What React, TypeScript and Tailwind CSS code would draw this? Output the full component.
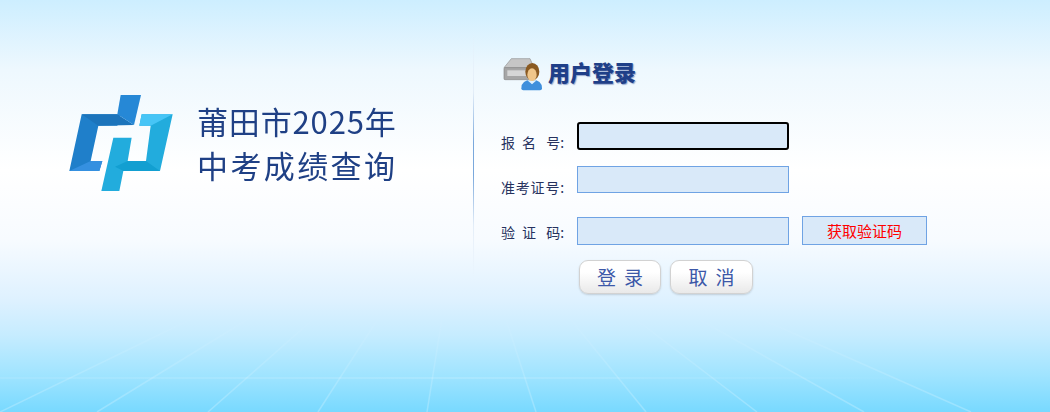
const cjk = "font-['Noto_Sans_CJK_SC','Liberation_Sans',sans-serif]"

const fieldBase = "block w-[212px] bg-[#d9e9f9] outline-none"
const labelBase = "w-[76px] shrink-0 text-[14px] leading-[18px] text-[#26325e]"
const actionBtn =
  "h-[34px] rounded-[9px] border border-[#d2d2d2] bg-[linear-gradient(to_bottom,#ffffff,#ffffff_35%,#e9e9e9)] pl-[8px] text-[19px] tracking-[8px] text-[#3c58a8] shadow-[0_1px_2px_rgba(0,0,0,0.15)]"

function Logo() {
  return (
    <svg width="125" height="115" viewBox="0 0 375 345" className="shrink-0 blur-[0.4px]">
      {/* left half */}
      <polygon points="65,88 182,88 172,122 115,122 92,228 127,228 118,258 28,258" fill="#1f7fca" />
      <polygon points="65,88 172,88 222,120 115,122" fill="#1c74bb" />
      <polygon points="182,30 243,30 222,120 172,88" fill="#2688d6" />
      <polygon points="28,258 92,228 127,228 118,258" fill="#3590e0" />
      {/* right half */}
      <polygon points="245,88 338,88 300,258 190,258 178,318 124,318 160,158 215,158 203,228 258,228 272,122 238,122" fill="#22acdd" />
      <polygon points="245,88 338,88 272,122 238,122" fill="#47c5f6" />
      <polygon points="203,228 258,228 300,258 190,258 165,245" fill="#129fd1" />
    </svg>
  )
}

function LoginIcon() {
  return (
    <svg width="50" height="40" viewBox="30 30 150 120" className="shrink-0 blur-[0.4px]">
      <polygon points="42,68 64,41 120,41 132,68" fill="#c6c6c6" stroke="#8f8f8f" strokeWidth="2" />
      <rect x="42" y="68" width="92" height="36" rx="3" fill="#a6a6a6" stroke="#868686" strokeWidth="2" />
      <rect x="52" y="76" width="64" height="17" fill="#d6d6d6" />
      <path d="M94 130 q0 -26 32 -26 q30 0 30 26 q0 6 -6 6 h-50 q-6 0 -6 -6z" fill="#3f8fdc" />
      <path d="M112 106 l14 12 l14 -12z" fill="#e2f2ff" />
      <ellipse cx="127" cy="80" rx="21" ry="26" fill="#8a5a22" />
      <ellipse cx="126" cy="89" rx="14" ry="19" fill="#f0c68a" />
    </svg>
  )
}

function FloorLines() {
  const bottoms = [0, 97, 208, 318, 427, 536, 646, 757, 864, 971]
  return (
    <svg width="1050" height="412" viewBox="0 0 1050 412" className="absolute inset-0 pointer-events-none">
      <defs>
        <linearGradient id="ray" gradientUnits="userSpaceOnUse" x1="0" y1="315" x2="0" y2="412">
          <stop offset="0" stopColor="#fff" stopOpacity="0" />
          <stop offset="1" stopColor="#fff" stopOpacity="0.24" />
        </linearGradient>
        <linearGradient id="horizon" gradientUnits="userSpaceOnUse" x1="0" y1="0" x2="945" y2="0">
          <stop offset="0" stopColor="#fff" stopOpacity="0.08" />
          <stop offset="0.5" stopColor="#fff" stopOpacity="0.14" />
          <stop offset="1" stopColor="#fff" stopOpacity="0" />
        </linearGradient>
      </defs>
      {bottoms.map((x) => (
        <line key={x} x1={x} y1="412" x2={x + (463 - x) * (97 / 225)} y2="315" stroke="url(#ray)" strokeWidth="1.5" />
      ))}
      <rect x="0" y="377" width="945" height="2" fill="url(#horizon)" />
    </svg>
  )
}

export default function App() {
  return (
    <div className={`${cjk} relative flex h-[412px] w-[1050px] overflow-hidden bg-[linear-gradient(to_bottom,#cdeeff_0px,#eef8fe_70px,#ffffff_170px,#f7fbff_240px,#def1ff_300px,#c6ecff_335px,#a0e4ff_375px,#78d9ff_412px)]`}>
      <FloorLines />

      {/* logo side */}
      <div className="flex h-[285px] w-[473px] shrink-0 items-start pl-[60px] pt-[85px]">
        <Logo />
        <div className="ml-[12px] mt-[14px] text-[#1f4085] blur-[0.3px]">
          <div className="text-[31px] leading-[44px] tracking-[0.85px] whitespace-nowrap">莆田市2025年</div>
          <div className="text-[31px] leading-[44px] tracking-[2.4px] whitespace-nowrap">中考成绩查询</div>
        </div>
      </div>

      <div className="mt-[30px] h-[250px] w-px shrink-0 bg-[linear-gradient(to_bottom,rgba(122,168,220,0),#e3edf8_25%,#7aa8dc_45%,#7aa8dc_58%,#e3edf8_78%,rgba(122,168,220,0))]" />

      {/* login form */}
      <div className="relative pl-[27px] pt-[55px]">
        <div className="-ml-px flex h-[40px] items-center">
          <LoginIcon />
          <span className="-ml-[2px] -mt-[8px] text-[22px] font-black leading-none text-[#1f3f88] [text-shadow:1px_1px_1px_rgba(60,90,160,0.5)]">用户登录</span>
        </div>

        <div className="mt-[27px] flex h-[28px] items-start">
          <label className={`${labelBase} mt-[11px]`}>
            <span className="tracking-[7px]">报名</span> 号:
          </label>
          <input className={`${fieldBase} h-[28px] rounded-[3px] border-2 border-black`} />
        </div>

        <div className="mt-[16px] flex h-[27px] items-start">
          <label className={`${labelBase} mt-[12px] tracking-[0.8px]`}>准考证号:</label>
          <input className={`${fieldBase} h-[27px] border border-[#6fa3e4]`} />
        </div>

        <div className="mt-[24px] flex h-[29px] items-start">
          <label className={`${labelBase} mt-[6px]`}>
            <span className="tracking-[7px]">验证</span> 码:
          </label>
          <input className={`${fieldBase} h-[28px] border border-[#6fa3e4]`} />
          <button className="-mt-px ml-[13px] h-[29px] w-[125px] border border-[#6fa3e4] bg-[#d9e9f9] text-[15px] leading-[27px] text-[#ff0000]">
            获取验证码
          </button>
        </div>

        <div className="ml-[78px] mt-[14px] flex gap-[9px]">
          <button className={`${actionBtn} w-[82px]`}>登录</button>
          <button className={`${actionBtn} w-[83px]`}>取消</button>
        </div>
      </div>
    </div>
  )
}
